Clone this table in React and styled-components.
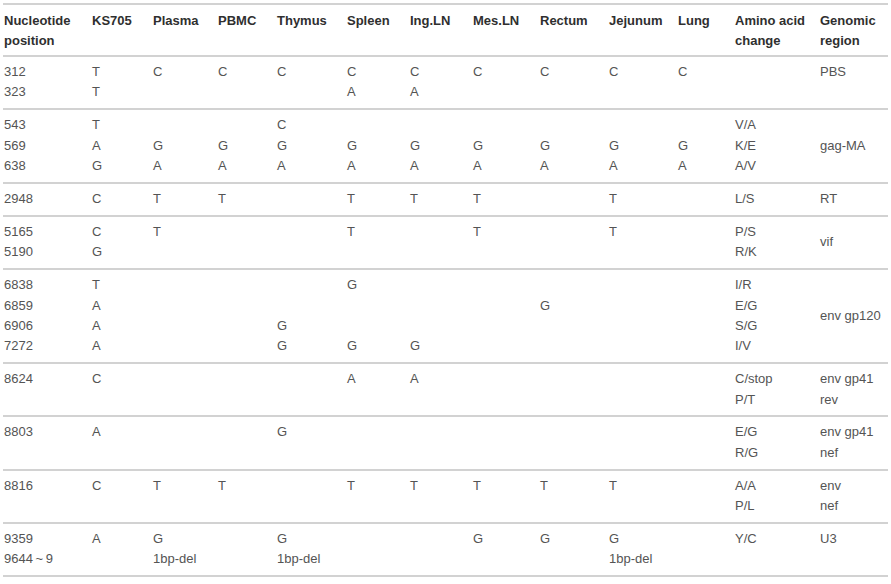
import React from "react";
import styled, { createGlobalStyle } from "styled-components";

const GlobalStyle = createGlobalStyle`
  body {
    margin: 0;
    background: #fff;
    font-family: "Liberation Sans", Arial, sans-serif;
  }
`;

const Wrapper = styled.div`
  padding: 3px 3px 0 3px;
`;

const Table = styled.table`
  width: 885px;
  border-collapse: collapse;
  table-layout: fixed;
  border-top: 2px solid #d2d2d2;
  border-bottom: 2px solid #d2d2d2;
`;

const HeadCell = styled.th`
  text-align: left;
  vertical-align: top;
  font-size: 13px;
  font-weight: bold;
  line-height: 19.5px;
  color: #2f2f2f;
  padding: 6px 0 5px 1px;
  border-bottom: 2px solid #d2d2d2;
`;

const Group = styled.tr`
  border-bottom: 2px solid #d2d2d2;
  &:last-child {
    border-bottom: none;
  }
`;

const Cell = styled.td`
  vertical-align: ${(p) => (p.$middle ? "middle" : "top")};
  padding: 5px 0 5.5px 1px;
  font-size: 13px;
  line-height: 20.4px;
  color: #545454;
  white-space: nowrap;
`;

const Line = styled.div`
  height: 20.4px;
`;

const widths = [88, 61, 65, 59, 70, 63, 63, 67, 69, 69, 57, 85, 69];

const headers = [
  ["Nucleotide", "position"],
  ["KS705"],
  ["Plasma"],
  ["PBMC"],
  ["Thymus"],
  ["Spleen"],
  ["Ing.LN"],
  ["Mes.LN"],
  ["Rectum"],
  ["Jejunum"],
  ["Lung"],
  ["Amino acid", "change"],
  ["Genomic", "region"],
];

// each group: columns of lines; last entry is genomic region
const groups = [
  {
    cols: [
      ["312", "323"],
      ["T", "T"],
      ["C"],
      ["C"],
      ["C"],
      ["C", "A"],
      ["C", "A"],
      ["C"],
      ["C"],
      ["C"],
      ["C"],
      [],
      ["PBS"],
    ],
  },
  {
    cols: [
      ["543", "569", "638"],
      ["T", "A", "G"],
      ["", "G", "A"],
      ["", "G", "A"],
      ["C", "G", "A"],
      ["", "G", "A"],
      ["", "G", "A"],
      ["", "G", "A"],
      ["", "G", "A"],
      ["", "G", "A"],
      ["", "G", "A"],
      ["V/A", "K/E", "A/V"],
      ["gag-MA"],
    ],
    middle: true,
  },
  {
    cols: [
      ["2948"],
      ["C"],
      ["T"],
      ["T"],
      [],
      ["T"],
      ["T"],
      ["T"],
      [],
      ["T"],
      [],
      ["L/S"],
      ["RT"],
    ],
  },
  {
    cols: [
      ["5165", "5190"],
      ["C", "G"],
      ["T"],
      [],
      [],
      ["T"],
      [],
      ["T"],
      [],
      ["T"],
      [],
      ["P/S", "R/K"],
      ["vif"],
    ],
    middle: true,
  },
  {
    cols: [
      ["6838", "6859", "6906", "7272"],
      ["T", "A", "A", "A"],
      [],
      [],
      ["", "", "G", "G"],
      ["G", "", "", "G"],
      ["", "", "", "G"],
      [],
      ["", "G"],
      [],
      [],
      ["I/R", "E/G", "S/G", "I/V"],
      ["env gp120"],
    ],
    middle: true,
  },
  {
    cols: [
      ["8624"],
      ["C"],
      [],
      [],
      [],
      ["A"],
      ["A"],
      [],
      [],
      [],
      [],
      ["C/stop", "P/T"],
      ["env gp41", "rev"],
    ],
  },
  {
    cols: [
      ["8803"],
      ["A"],
      [],
      [],
      ["G"],
      [],
      [],
      [],
      [],
      [],
      [],
      ["E/G", "R/G"],
      ["env gp41", "nef"],
    ],
  },
  {
    cols: [
      ["8816"],
      ["C"],
      ["T"],
      ["T"],
      [],
      ["T"],
      ["T"],
      ["T"],
      ["T"],
      ["T"],
      [],
      ["A/A", "P/L"],
      ["env", "nef"],
    ],
  },
  {
    cols: [
      ["9359", "9644\u2009~\u20099"],
      ["A"],
      ["G", "1bp-del"],
      [],
      ["G", "1bp-del"],
      [],
      [],
      ["G"],
      ["G"],
      ["G", "1bp-del"],
      [],
      ["Y/C"],
      ["U3"],
    ],
  },
];

export default function App() {
  return (
    <Wrapper>
      <GlobalStyle />
      <Table>
        <colgroup>
          {widths.map((w, i) => (
            <col key={i} style={{ width: w }} />
          ))}
        </colgroup>
        <thead>
          <tr>
            {headers.map((h, i) => (
              <HeadCell key={i}>
                {h.map((t, j) => (
                  <div key={j}>{t}</div>
                ))}
              </HeadCell>
            ))}
          </tr>
        </thead>
        <tbody>
          {groups.map((g, gi) => (
            <Group key={gi}>
              {g.cols.map((lines, ci) => (
                <Cell key={ci} $middle={g.middle && ci === g.cols.length - 1}>
                  {lines.map((t, li) => (
                    <Line key={li}>{t}</Line>
                  ))}
                </Cell>
              ))}
            </Group>
          ))}
        </tbody>
      </Table>
    </Wrapper>
  );
}
